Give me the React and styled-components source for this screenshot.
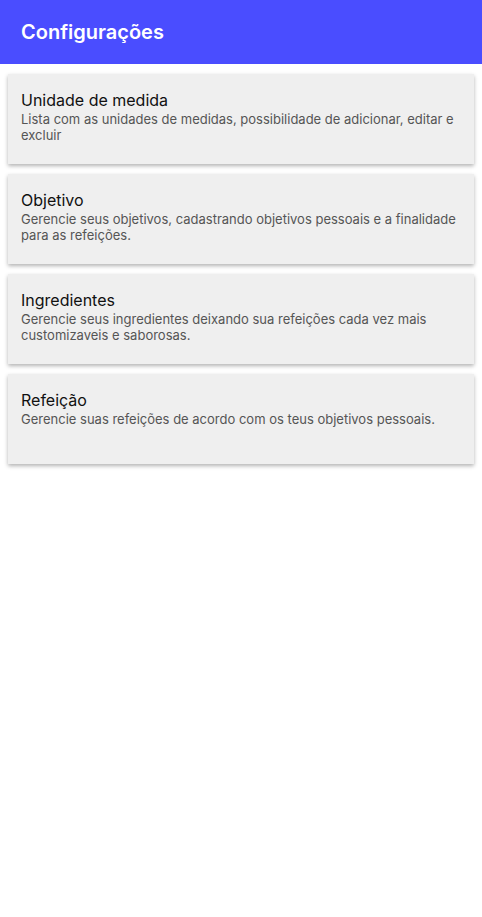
import React from "react";
import styled, { createGlobalStyle } from "styled-components";

const GlobalStyle = createGlobalStyle`
  body {
    margin: 0;
    background: #ffffff;
    font-family: Inter, "Noto Sans", sans-serif;
  }
`;

const items = [
  {
    title: "Unidade de medida",
    text: "Lista com as unidades de medidas, possibilidade de adicionar, editar e excluir",
  },
  {
    title: "Objetivo",
    text: "Gerencie seus objetivos, cadastrando objetivos pessoais e a finalidade para as refeições.",
  },
  {
    title: "Ingredientes",
    text: "Gerencie seus ingredientes deixando sua refeições cada vez mais customizaveis e saborosas.",
  },
  {
    title: "Refeição",
    text: "Gerencie suas refeições de acordo com os teus objetivos pessoais.",
  },
];

function App() {
  return (
    <>
      <GlobalStyle />
      <Page>
        <Header>
          <HeaderTitle>Configurações</HeaderTitle>
        </Header>
        <List>
          {items.map((item) => (
            <Card key={item.title}>
              <CardTitle>{item.title}</CardTitle>
              <CardText>{item.text}</CardText>
            </Card>
          ))}
        </List>
      </Page>
    </>
  );
}

export default App;

const Page = styled.div`
  min-height: 100vh;
  display: flex;
  flex-direction: column;
`;

const Header = styled.header`
  height: 64px;
  background-color: #4a4dff;
  display: flex;
  align-items: center;
  padding: 0 21px;
  box-sizing: border-box;
`;

const HeaderTitle = styled.h1`
  margin: 0;
  color: #ffffff;
  font-size: 20px;
  font-weight: 600;
`;

const List = styled.div`
  display: flex;
  flex-direction: column;
  gap: 10px;
  padding: 10px 8px;
`;

const Card = styled.div`
  height: 90px;
  box-sizing: border-box;
  padding: 16px 13px;
  background-color: #efefef;
  box-shadow: 0 2px 4px rgba(0, 0, 0, 0.3);
`;

const CardTitle = styled.div`
  font-size: 16px;
  line-height: 20px;
  color: #111111;
`;

const CardText = styled.div`
  margin-top: 1px;
  font-size: 13px;
  line-height: 16px;
  color: #555555;
`;
